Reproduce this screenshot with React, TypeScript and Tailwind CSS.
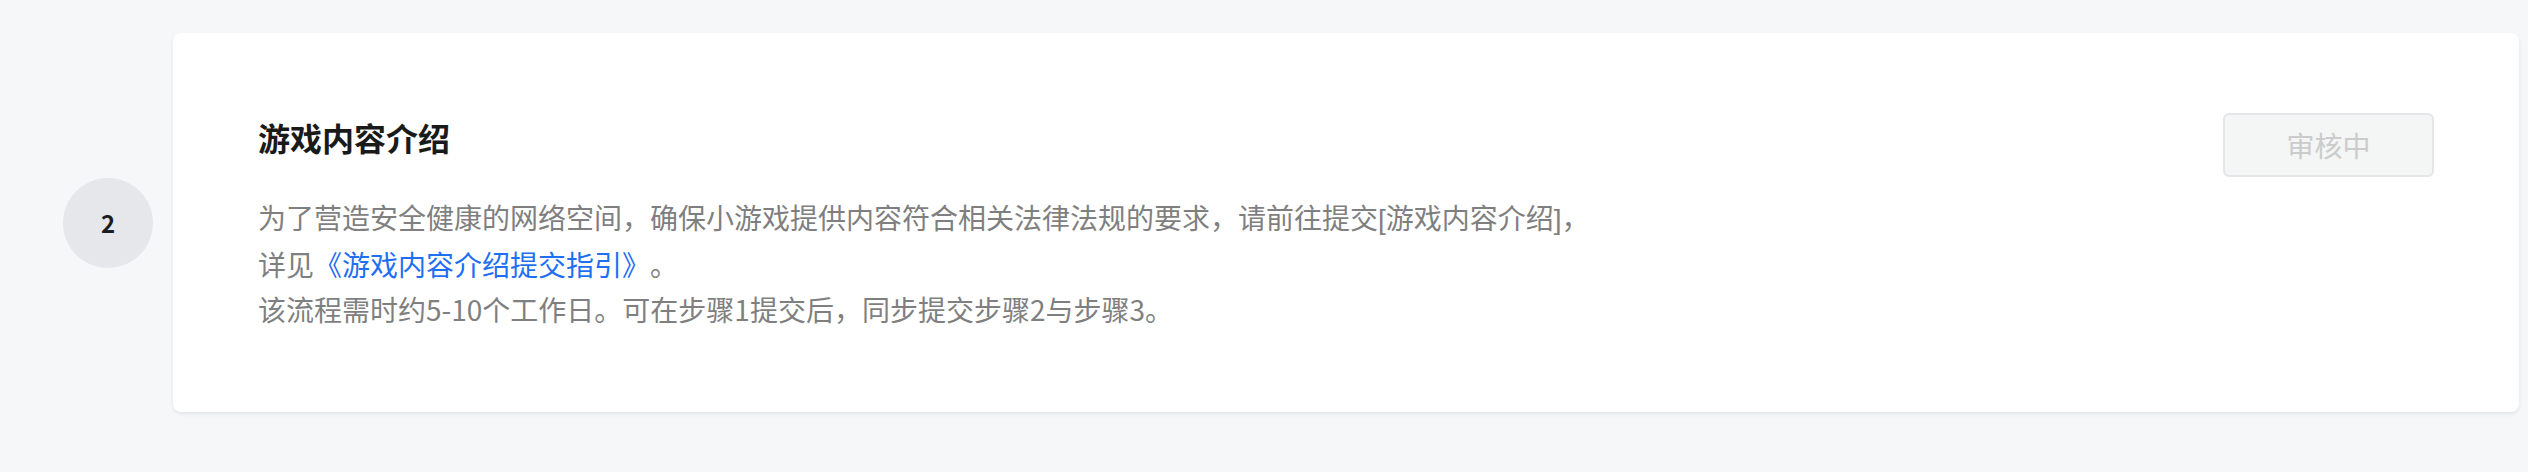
import React from 'react'

const font = '"Noto Sans CJK SC", "Noto Sans", sans-serif'

// Step row: number badge + card with description and status button
const StepCard = () => {
  return (
    <div className="flex items-center pl-[63px] pr-[9px]">
      <div className="flex h-[90px] w-[90px] shrink-0 items-center justify-center rounded-full bg-[#e5e7ea] text-[24px] font-bold text-[#1d1d1f]">
        2
      </div>

      <div className="ml-[20px] flex flex-1 items-start justify-between rounded-[8px] bg-white px-[85px] py-[80px] shadow-[0_2px_4px_rgba(0,0,0,0.08)]">
        <div>
          <h2 className="text-[32px] font-bold leading-[48px] text-[#1a1a1a]">游戏内容介绍</h2>
          <div className="mt-[34px] text-[28px] leading-[45px] text-[#7f7f7f] [text-spacing-trim:space-all]">
            <p>
              为了营造安全健康的网络空间，确保小游戏提供内容符合相关法律法规的要求，请前往提交
              <span style={{ fontFamily: '"Liberation Sans", sans-serif' }}>[</span>游戏内容介绍
              <span style={{ fontFamily: '"Liberation Sans", sans-serif' }}>]</span>，
            </p>
            <p>
              详见<a className="text-[#1f6ff2]">《游戏内容介绍提交指引》</a>。
            </p>
            <p>该流程需时约5-10个工作日。可在步骤1提交后，同步提交步骤2与步骤3。</p>
          </div>
        </div>

        <button
          type="button"
          disabled
          className="flex h-[64px] w-[211px] items-center justify-center rounded-[6px] border-2 border-[#e4e6e9] bg-[#f4f5f5] text-[28px] text-[#cbcbcb]"
        >
          审核中
        </button>
      </div>
    </div>
  )
}

export default function App() {
  return (
    <div className="h-[472px] w-full bg-[#f6f7f9] pt-[33px]" style={{ fontFamily: font }}>
      <StepCard />
    </div>
  )
}
